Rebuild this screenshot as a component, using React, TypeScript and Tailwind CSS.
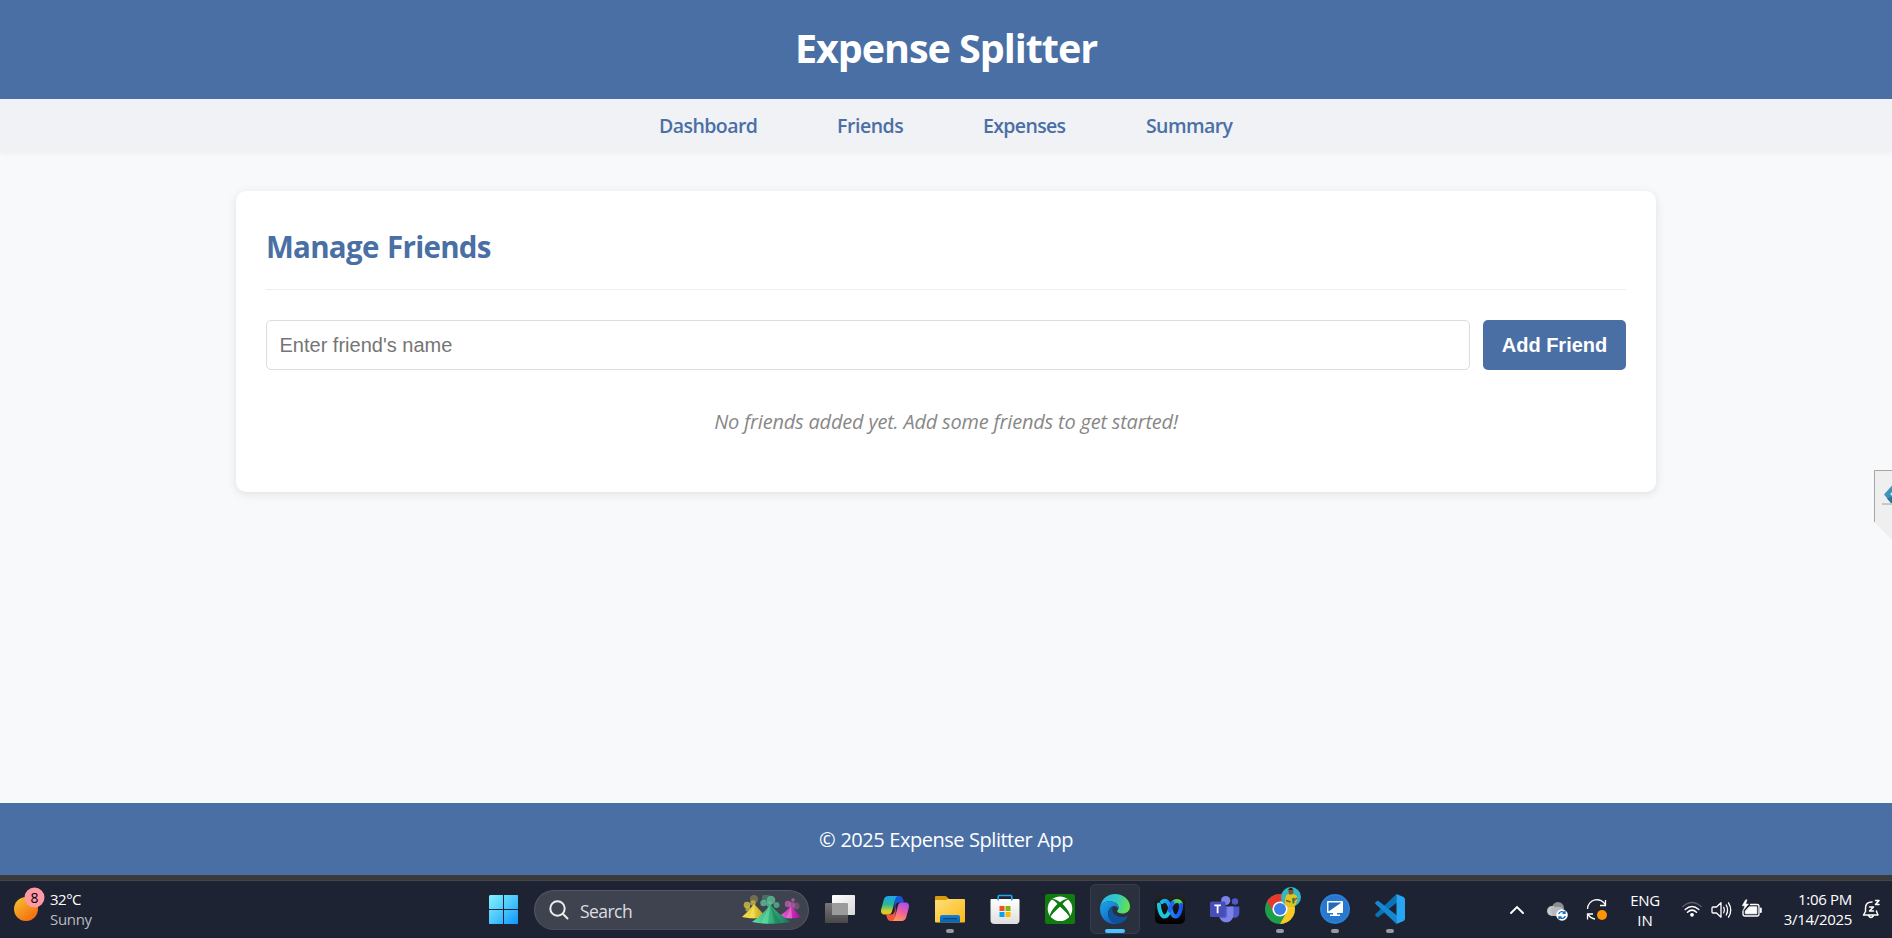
import React from "react";

const sans = "font-['Open_Sans','Noto_Sans',sans-serif]";

function NavLink({ label, cls }: { label: string; cls: string }) {
  return (
    <a href="#" className={"whitespace-nowrap " + cls}>
      {label}
    </a>
  );
}

function WindowsLogo() {
  return (
    <svg width="30" height="30" viewBox="0 0 30 30">
      <defs>
        <linearGradient id="win" x1="0" y1="0" x2="30" y2="30" gradientUnits="userSpaceOnUse">
          <stop offset="0" stopColor="#83f3ff" />
          <stop offset="0.45" stopColor="#4fcbfc" />
          <stop offset="1" stopColor="#0b93fb" />
        </linearGradient>
      </defs>
      <path d="M1 0h13v14H0V1zM15 0h13.500l.5.5V14H15zM0 15h14v14H.5L0 28.500zM15 15h14v13.500l-.5.5H15z" fill="url(#win)" />
    </svg>
  );
}

function SearchArt() {
  return (
    <svg width="60" height="30" viewBox="0 0 60 30">
      <defs>
        <linearGradient id="hy" x1="0" x2="1"><stop offset="0" stopColor="#f7e34b" /><stop offset=".6" stopColor="#e0c233" /><stop offset="1" stopColor="#b8921f" /></linearGradient>
        <linearGradient id="hg" x1="0" x2="1"><stop offset="0" stopColor="#5ee0a5" /><stop offset=".5" stopColor="#35b07c" /><stop offset="1" stopColor="#117055" /></linearGradient>
        <linearGradient id="hp" x1="0" x2="1"><stop offset="0" stopColor="#f06ad8" /><stop offset="1" stopColor="#a80c9c" /></linearGradient>
      </defs>
      <g fill="#d3c044"><circle cx="12" cy="4" r="4" opacity=".35" /><circle cx="5" cy="10" r="3.300" opacity=".8" /><circle cx="11" cy="8" r="2.800" opacity=".7" /><circle cx="6" cy="14" r="2.600" opacity=".7" /></g>
      <path d="M0 22Q7 16 12 9Q19 16 24 22Q12 24.500 0 22z" fill="url(#hy)" />
      <path d="M12 9L7 23.200L13 23.500z" fill="#fff27a" opacity=".45" />
      <g fill="#c75fb2"><circle cx="51" cy="5" r="1.800" opacity=".8" /><circle cx="46" cy="9" r="3.200" opacity=".75" /><circle cx="54" cy="11" r="3.500" opacity=".4" /><circle cx="50" cy="10" r="3" opacity=".6" /></g>
      <path d="M36 22Q44 17 49 11Q54 17 59 22Q50 24.500 36 22z" fill="url(#hp)" />
      <path d="M49 11L44 23.200L50 23.500z" fill="#ff9bea" opacity=".45" />
      <g fill="#5cc197"><circle cx="24" cy="3" r="4" opacity=".35" /><circle cx="29" cy="5" r="4.300" opacity=".8" /><circle cx="21.500" cy="8" r="3.200" opacity=".8" /><circle cx="34.500" cy="10" r="3" opacity=".7" /><circle cx="27" cy="9" r="2.800" opacity=".8" /></g>
      <path d="M10 27Q22 19 28 9.500Q36 19 49 27Q28 30.500 10 27z" fill="url(#hg)" />
      <path d="M28 9.500L19 28.300L26 28.700z" fill="#8df5c4" opacity=".35" />
      <path d="M28 9.500L33 28.500L39 28z" fill="#0c5a44" opacity=".3" />
    </svg>
  );
}

function TaskView() {
  return (
    <svg width="30" height="30" viewBox="0 0 30 30">
      <defs>
        <linearGradient id="tv" x1="0" y1="0" x2="1" y2="1"><stop offset="0" stopColor="#fff" /><stop offset="1" stopColor="#d8d8d8" /></linearGradient>
        <linearGradient id="tb" x1="0" y1="0" x2="0" y2="1"><stop offset="0" stopColor="#777" /><stop offset="1" stopColor="#484848" /></linearGradient>
      </defs>
      <rect x="0" y="9" width="23" height="20" rx="1" fill="url(#tb)" />
      <rect x="7" y="1" width="23" height="20" rx="1" fill="url(#tv)" />
      <path d="M7 9h15a1 1 0 0 1 1 1v11H7z" fill="#9b9b9b" />
    </svg>
  );
}

function Copilot() {
  return (
    <svg width="30" height="30" viewBox="0 0 30 30">
      <defs>
        <linearGradient id="c1" x1="0" y1="0" x2="0" y2="1"><stop offset="0" stopColor="#1fa5ee" /><stop offset=".45" stopColor="#28b59b" /><stop offset=".8" stopColor="#c9cf2d" /><stop offset="1" stopColor="#f2c21b" /></linearGradient>
        <linearGradient id="c2" x1=".7" y1="0" x2=".3" y2="1"><stop offset="0" stopColor="#a94fec" /><stop offset=".5" stopColor="#f0609c" /><stop offset="1" stopColor="#ff9a52" /></linearGradient>
      </defs>
      <path d="M15 2h4.500c2 0 2.900 1.400 3.500 3.300L24 8.500h-5c-2 0-3 1-3.600 3L14 17z" fill="#1656d8" />
      <path d="M15 27h-4.500c-2 0-2.900-1.400-3.500-3.300L6 20.500h5c2 0 3-1 3.600-3L16 12z" fill="#f4553e" />
      <path d="M8.500 2h10c-2 0-2.800 1.600-3.400 3.600l-3 11.400c-.6 2.200-1.600 3.500-3.600 3.500H4.500C1.500 20.500.5 18 1.200 15.200L3.700 6C4.400 3.500 6 2 8.500 2z" fill="url(#c1)" />
      <path d="M21.500 27h-10c2 0 2.800-1.600 3.400-3.600l3-11.400c.6-2.200 1.600-3.500 3.600-3.500h4c3 0 4 2.500 3.300 5.300L26.300 23c-.7 2.500-2.300 4-4.800 4z" fill="url(#c2)" />
    </svg>
  );
}

function Explorer() {
  return (
    <svg width="30" height="30" viewBox="0 0 30 30">
      <defs>
        <linearGradient id="fo" x1="0" y1="0" x2="1" y2="1"><stop offset="0" stopColor="#ffe07a" /><stop offset="1" stopColor="#fbb816" /></linearGradient>
        <linearGradient id="fb" x1="0" y1="0" x2="0" y2="1"><stop offset="0" stopColor="#1683d8" /><stop offset="1" stopColor="#0b5cab" /></linearGradient>
      </defs>
      <path d="M0 3q0-1 1-1h9q1 0 2 1l2 2v5H0z" fill="#dc9a0a" />
      <path d="M0 7q0-1 1-1h9.500q.8 0 1.500-.5l.5-.5H29q1 0 1 1v21.500q0 1-1 1H1q-1 0-1-1z" fill="url(#fo)" />
      <path d="M5 28.500V23q0-2 2-2h16q2 0 2 2v5.500z" fill="url(#fb)" />
      <rect x="8" y="24" width="14" height="1.300" rx=".6" fill="#0a4585" />
    </svg>
  );
}

function Store() {
  return (
    <svg width="30" height="30" viewBox="0 0 30 30">
      <defs><linearGradient id="st" x1="0" y1="0" x2="0" y2="1"><stop offset="0" stopColor="#fff" /><stop offset="1" stopColor="#dedede" /></linearGradient></defs>
      <path d="M.5 6q0-1 1-1h27q1 0 1 1v20q0 4-4 4h-21q-4 0-4-4z" fill="url(#st)" />
      <path d="M8.200 6.500V2.500q0-1 1-1h11.600q1 0 1 1v4" fill="none" stroke="#22a7ee" strokeWidth="1.600" />
      <path d="M9.500 12h5v5h-5z" fill="#f25022" /><path d="M15.500 12h5v5h-5z" fill="#7fba00" />
      <path d="M9.500 18h5v5h-5z" fill="#00a4ef" /><path d="M15.500 18h5v5h-5z" fill="#ffb900" />
    </svg>
  );
}

function Xbox() {
  return (
    <svg width="30" height="30" viewBox="0 0 30 30">
      <rect width="30" height="30" rx="2.500" fill="#107c10" />
      <circle cx="15" cy="14.800" r="12.300" fill="#fff" />
      <path d="M6 5.500C8.500 4 12 6 15 8.200C18 6 21.500 4 24 5.500C21.500 5.600 19.500 7.600 17.600 10C21.500 14 26 19.500 25 23.500C23.500 21 19 16 15 12.800C11 16 6.500 21 5 23.500C4 19.500 8.500 14 12.400 10C10.500 7.600 8.500 5.600 6 5.500z" fill="#107c10" />
      <path d="M9 4.400Q15 1.500 21 4.400Q18 4 15 5.800Q12 4 9 4.400z" fill="#fff" />
    </svg>
  );
}

function Edge() {
  return (
    <svg width="30" height="30" viewBox="0 0 30 30">
      <defs>
        <linearGradient id="e1" x1="0" y1=".3" x2="1" y2=".5"><stop offset="0" stopColor="#2bb8ee" /><stop offset=".5" stopColor="#30c7c8" /><stop offset="1" stopColor="#66e447" /></linearGradient>
        <linearGradient id="e2" x1="0" y1="0" x2=".6" y2="1"><stop offset="0" stopColor="#1fa4e6" /><stop offset="1" stopColor="#0c68c5" /></linearGradient>
      </defs>
      <path d="M0 14C1 5.500 7 0 15 0c8.500 0 15 6 15 12.500 0 4.500-3.500 7-7.500 7-3.500 0-5.300-1.200-5.300-2.300 0-.9 1.300-1.400 1.300-3.700C18.500 9.500 14 7.300 9.500 7.300 4.500 7.300 1 10 0 14z" fill="url(#e1)" />
      <path d="M0 15C0 10.500 4 7.300 9.500 7.300c4.500 0 9 2.400 9 6.200 0 .5-.1 1-.2 1.300C17.500 12.800 16 12 14.500 12c-3.500 0-6.500 3.500-6.500 8 0 5 4 9 9 9.900C7 31 0 24 0 15z" fill="url(#e2)" />
      <path d="M12.500 12.400C9.500 13.500 8 16.500 8 20c0 5 4 9.900 9.300 9.900 4.500-.4 8-3 10.200-6.800.4-.7-.2-1.200-.9-.9-1.200.6-2.800.9-4.100.9-5.500 0-10.200-3.500-10.200-7.600 0-1.200.3-2.200.2-3.100z" fill="#10529a" />
    </svg>
  );
}

function Webex() {
  return (
    <svg width="30" height="30" viewBox="0 0 30 30">
      <defs>
        <linearGradient id="wb" x1="0" y1="0" x2="0" y2="1"><stop offset="0" stopColor="#262626" /><stop offset="1" stopColor="#000" /></linearGradient>
        <linearGradient id="w1" x1="0" y1="0" x2="1" y2="0"><stop offset="0" stopColor="#16b9ee" /><stop offset="1" stopColor="#1a52f2" /></linearGradient>
        <linearGradient id="w2" x1="0" y1="1" x2="1" y2="0"><stop offset="0" stopColor="#1aa9e8" /><stop offset="1" stopColor="#57dd4f" /></linearGradient>
      </defs>
      <rect width="30" height="30" rx="5" fill="url(#wb)" />
      <g fill="none" strokeWidth="4" strokeLinecap="round">
        <path d="M17 10C18.500 7.500 20 6.900 22 6.900C24.500 6.900 26 8.500 25.800 11" stroke="url(#w2)" />
        <path d="M15 15.500C13.500 20 12 22.500 9.500 22.500C6 22.500 4 15 3.900 10.500" stroke="#1cc6dd" />
        <path d="M7 8C10 5.500 13 7 14.500 11.500C16 17 17.500 22.500 20.500 22.500C24.500 22.500 26.300 14.500 26 11" stroke="url(#w1)" />
        <path d="M17.500 9Q15.500 12 14.500 16.500" stroke="#2463f0" />
      </g>
    </svg>
  );
}

function Teams() {
  return (
    <svg width="30" height="30" viewBox="0 0 30 30">
      <circle cx="25" cy="7.500" r="3.200" fill="#5059c9" />
      <path d="M20 12.500h8.500q.8 0 .8.800V19c0 3-2 4.800-4.500 4.800S20 22 20 19z" fill="#5059c9" />
      <circle cx="15.700" cy="6.500" r="4.600" fill="#7b83eb" />
      <path d="M9 12.500h13.500q1 0 1 1V20c0 5-3 8.300-7.300 8.300S9 25 9 20z" fill="#7b83eb" />
      <path d="M9 12.500h8V22q0 2-2 2H9.500z" fill="#4d55b5" opacity=".7" />
      <rect x="0" y="7.500" width="15.500" height="15.500" rx="1.500" fill="#464eb8" />
      <path d="M4.300 11.300h6.600M7.600 11.300v8" stroke="#fff" strokeWidth="1.800" />
    </svg>
  );
}

function Chrome() {
  return (
    <svg width="38" height="38" viewBox="0 0 38 38">
      <circle cx="16" cy="22" r="15" fill="#1e9e4b" />
      <path d="M3.010 14.500A15 15 0 0 1 28.990 14.500H16L10 25.500z" fill="#e8382d" />
      <path d="M28.990 14.500A15 15 0 0 1 16 37L22.500 25.500L16 14.500z" fill="#fcc924" />
      <circle cx="16" cy="22" r="7.600" fill="#fff" />
      <circle cx="16" cy="22" r="6" fill="#3a7fe8" />
      <circle cx="27" cy="10" r="10" fill="#35b6c4" />
      <path d="M20.500 17.500q.3-6 1.700-9.500l4-1.500l4.500 1q3.500 2 2.600 4.500l-1.300 5.500Q27 22.500 20.500 17.500z" fill="#e4c321" />
      <path d="M24.300 2.500q2.700-2.500 4.900 0l.3 3.500q-2 3-4.700 1z" fill="#7d5531" />
      <path d="M24.200 3q2.800-4.500 5 0z" fill="#2c2118" />
      <path d="M28 11.500l2.500-1v5.500l-1.800 1z" fill="#2f7b54" />
      <path d="M22 13.500l4.500 1.500M33 11l-3 2.500" stroke="#7c5530" strokeWidth="1.400" />
    </svg>
  );
}

function RemoteDesktop() {
  return (
    <svg width="30" height="30" viewBox="0 0 30 30">
      <circle cx="15" cy="15" r="15" fill="#2878cf" />
      <circle cx="15" cy="15" r="14" fill="none" stroke="#2d86dc" strokeWidth="1" />
      <rect x="7" y="7" width="16" height="12" rx="1" fill="#fff" />
      <path d="M8.500 8.500h13L8.500 17.500z" fill="#2769b4" />
      <path d="M13 19h4v1.500h3V22H10v-1.500h3z" fill="#fff" />
    </svg>
  );
}

function VSCode() {
  return (
    <svg width="30" height="30" viewBox="0 0 30 30">
      <path d="M21.500 0L22 8.500L3.500 23Q2.700 23.500 2 23L.4 21.500Q-.3 20.700.5 20z" fill="#0a72b8" />
      <path d="M21.500 30L22 21.500L3.500 7Q2.700 6.500 2 7L.4 8.500Q-.3 9.300.5 10z" fill="#1488d0" />
      <path d="M21.500 0L28.500 3Q30 3.700 30 5.500v19q0 1.800-1.500 2.500l-7 3z" fill="#27a5f2" />
    </svg>
  );
}

function AppSlot({ children, running, active }: { children: React.ReactNode; running?: boolean; active?: boolean }) {
  return (
    <div
      className={
        "relative flex h-[50px] w-[50px] shrink-0 items-center justify-center rounded-[5px] " +
        (active ? "border border-[#373c4a] bg-[#2b303f]" : "")
      }
    >
      {children}
      {running && <span className="absolute bottom-[1px] left-[21px] h-[4px] w-[8px] rounded-full bg-[#9699a1]" />}
      {active && <span className="absolute bottom-0 left-[14px] h-[4px] w-[20px] rounded-full bg-[#4cc2ff]" />}
    </div>
  );
}

function TrayIcons() {
  return (
    <svg width="82" height="24" viewBox="0 0 82 24" fill="none" stroke="#fff" strokeLinecap="round" strokeLinejoin="round">
      <g strokeWidth="1.500">
        <path d="M1 8.500Q10 .5 19 8.500" stroke="#5a5e6a" />
        <path d="M3.200 11.500Q10 5.500 16.800 11.500" />
        <path d="M5.500 14.200Q10 10 14.500 14.200" />
      </g>
      <circle cx="10" cy="16.800" r="1.900" fill="#fff" stroke="none" />
      <g strokeWidth="1.300">
        <path d="M31 9h3.500L39 4.800v14.400L34.500 15H31q-1 0-1-1v-4q0-1 1-1z" />
        <path d="M41.700 9.200q1.600 2.800 0 5.600M44.200 7q2.800 5 0 10M46.500 4.800q4.500 7.200 0 14.400" />
      </g>
      <path d="M68.500 6.500H75q2 0 2 2v7.500q0 2-2 2H63q-2 0-2-2v-3" strokeWidth="1.300" />
      <path d="M67.500 8.800h7.300v7H63.300v-2.500z" fill="#fff" stroke="#fff" strokeWidth=".8" />
      <path d="M78.800 10.500v3.500" strokeWidth="2" />
      <path d="M63.500 2L60.200 7.800h2.600l-1.600 4.700L66.500 6h-2.800L65 2z" fill="#fff" strokeWidth=".5" />
    </svg>
  );
}

export default function App() {
  return (
    <div className={"flex h-[938px] w-[1892px] flex-col overflow-hidden bg-[#f8f9fb] " + sans}>
      <header className="flex h-[99px] shrink-0 items-center justify-center bg-[#4a6fa5] pb-[3px] text-white">
        <h1 className="whitespace-nowrap text-[39.500px] font-bold leading-[60px] tracking-[-1.050px]">Expense Splitter</h1>
      </header>

      <nav className="z-10 flex h-[52px] shrink-0 items-center justify-center gap-20 bg-[#f0f2f5] pt-[2px] text-[19.500px] font-semibold leading-[30px] text-[#4a6fa5] shadow-[0_2px_5px_rgba(0,0,0,0.05)]">
        <NavLink label="Dashboard" cls="w-[98px] tracking-[-0.550px]" />
        <NavLink label="Friends" cls="w-[66px] tracking-[-0.450px]" />
        <NavLink label="Expenses" cls="w-[83px] tracking-[-0.650px]" />
        <NavLink label="Summary" cls="w-[87px] tracking-[-0.600px]" />
      </nav>

      <main className="relative flex grow flex-col items-center pt-10">
        <section className="flex h-[301px] w-[1420px] flex-col rounded-[10px] bg-white px-[30px] pt-[30px] shadow-[0_2px_10px_rgba(0,0,0,0.1)]">
          <h2 className="h-[69px] border-b border-[#eeeeee] pt-[1px] text-[29.500px] font-bold leading-[50px] tracking-[-0.720px] text-[#4a6fa5] [word-spacing:1.500px]">
            Manage Friends
          </h2>
          <form className="mt-[30px] flex h-[50px] gap-[13px]" onSubmit={(e) => e.preventDefault()}>
            <input
              className="grow rounded-[5px] border border-[#dddddd] px-[12.500px] font-['Liberation_Sans',Arial,sans-serif] text-[20px] placeholder:text-[#757575]"
              placeholder="Enter friend's name"
            />
            <button className="w-[143px] rounded-[5px] bg-[#4a6fa5] font-['Liberation_Sans',Arial,sans-serif] text-[20px] font-bold text-white">
              Add Friend
            </button>
          </form>
          <p className="mt-[37px] whitespace-nowrap text-center text-[20px] italic leading-[30px] tracking-[-0.200px] text-[#888888]">
            No friends added yet. Add some friends to get started!
          </p>
        </section>

        <svg className="absolute right-0 top-[319px]" width="18" height="70" viewBox="0 0 18 70">
          <path d="M0 0h18v70L0 52z" fill="#efefef" />
          <path d="M.5 52V.5H18" fill="none" stroke="#a6a6a6" />
          <path d="M18 15.500L10 24.500L17 33h1z" fill="#3d94bd" />
          <path d="M18 26.500L13 28.500L17 33h1z" fill="#2c7596" />
          <circle cx="18" cy="24" r="1.500" fill="#d9eef7" />
          <path d="M8 34h10" stroke="#a0a0a0" />
        </svg>
      </main>

      <footer className="flex h-[72px] shrink-0 items-center justify-center bg-[#4a6fa5] pt-[2px] text-[20px] text-white">
        <span className="tracking-[-0.500px] [word-spacing:0.500px]">© 2025 Expense Splitter App</span>
      </footer>

      <div className="h-[6px] shrink-0 border-b border-[#45444a] bg-[#3a3a3a]" />

      <div className="flex h-[57px] shrink-0 bg-[#1e2333] text-[15px] text-white">
        <div className="flex w-[476px] pl-[14px] pt-[6px]">
          <div className="relative h-9 w-[36px]">
            <svg width="37" height="36" viewBox="0 0 37 36">
              <defs><linearGradient id="sun" x1="0" y1="0" x2=".8" y2="1"><stop offset="0" stopColor="#f7c531" /><stop offset="1" stopColor="#f3690c" /></linearGradient></defs>
              <circle cx="12" cy="22" r="12" fill="url(#sun)" />
              <circle cx="20.500" cy="10.500" r="10" fill="#ff99a4" />
            </svg>
            <span className="absolute left-[11px] top-0 w-[19px] text-center text-[14px] leading-[21px] text-black">8</span>
          </div>
          <div className="flex flex-col pt-[2px] leading-5">
            <span className="tracking-[-0.5px]">32°C</span>
            <span className="tracking-[-0.300px] text-[#b9bbc1]">Sunny</span>
          </div>
        </div>

        <div className="flex items-start gap-[5px] pt-[3px]">
          <div className="flex h-[50px] w-[53px] items-center pl-[13px] pt-[2px]">
            <WindowsLogo />
          </div>
          <div className="mt-[6px] flex h-10 w-[275px] items-center rounded-full border border-[#545865] border-b-[#4a4d59] bg-[#3f434f] pl-[14px] pr-[6px]">
            <svg width="20" height="20" viewBox="0 0 20 20" fill="none" stroke="#eeeeee" strokeWidth="2" strokeLinecap="round">
              <circle cx="8.500" cy="8.500" r="7.200" /><path d="M14 14l4.500 4.500" />
            </svg>
            <span className="ml-[11px] grow pt-[2px] text-[17.500px] tracking-[-0.550px] text-[#dcdde0]">Search</span>
            <SearchArt />
          </div>
          <div className="ml-[1px] flex gap-[5px]">
            <AppSlot><TaskView /></AppSlot>
            <AppSlot><Copilot /></AppSlot>
            <AppSlot running><Explorer /></AppSlot>
            <AppSlot><Store /></AppSlot>
            <AppSlot><Xbox /></AppSlot>
            <AppSlot active><Edge /></AppSlot>
            <AppSlot><Webex /></AppSlot>
            <AppSlot><Teams /></AppSlot>
            <AppSlot running><div className="-mt-[6px] ml-[6px]"><Chrome /></div></AppSlot>
            <AppSlot running><RemoteDesktop /></AppSlot>
            <AppSlot running><VSCode /></AppSlot>
          </div>
        </div>

        <div className="ml-auto flex items-start pt-[1px]">
          <svg className="mt-[22px]" width="16" height="12" viewBox="0 0 16 12" fill="none" stroke="#fff" strokeWidth="1.900" strokeLinecap="round"><path d="M2 9l6-6 6 6" /></svg>
          <svg className="ml-[22px] mt-[20px]" width="22" height="22" viewBox="0 0 22 22">
            <circle cx="11" cy="6" r="6" fill="#8b8d92" /><circle cx="5" cy="9" r="5" fill="#c6c7ca" /><path d="M4 5h10l4 5v4H5z" fill="#b7b8bb" />
            <circle cx="15" cy="13" r="5.800" fill="#fff" />
            <path d="M11.700 12a3.400 3.400 0 0 1 6-1M18.300 14a3.400 3.400 0 0 1-6 1M18 8.800v2.500h-2.500M12 17.300v-2.500h2.500" fill="none" stroke="#0f6cbd" strokeWidth="1.300" />
          </svg>
          <svg className="ml-[17px] mt-[17px]" width="22" height="22" viewBox="0 0 22 22" fill="none" stroke="#fff" strokeWidth="1.300">
            <path d="M1.500 10A9.500 9.500 0 0 1 19.500 6M19.500 1v5.500H14M1.500 20.500V15H7M2 15.500Q5 19.500 9 20" />
            <circle cx="16" cy="16" r="5" fill="#ff9500" stroke="none" />
          </svg>
          <div className="ml-[20px] mt-[8px] flex w-[34px] flex-col items-center leading-5">
            <span className="tracking-[-0.3px]">ENG</span>
            <span>IN</span>
          </div>
          <div className="ml-[20px] mt-[16px]"><TrayIcons /></div>
          <div className="mt-[7px] flex w-[88px] flex-col items-end leading-5">
            <span className="whitespace-nowrap tracking-[-0.3px]">1:06 PM</span>
            <span className="whitespace-nowrap tracking-[-0.3px]">3/14/2025</span>
          </div>
          <svg className="ml-[10px] mr-[11px] mt-[17px]" width="19" height="20" viewBox="0 0 19 20" fill="none" stroke="#fff" strokeWidth="1.500" strokeLinecap="round" strokeLinejoin="round">
            <path d="M10 3Q3.500 3 3.500 9v3.500L1.500 16H16l-1.500-3.500V12M6.500 16.500Q9 20.500 11.500 16.500M7.500 8h4l-4 4h4M13.500 1.500H17l-3.500 4H17" />
          </svg>
        </div>
      </div>
    </div>
  );
}
